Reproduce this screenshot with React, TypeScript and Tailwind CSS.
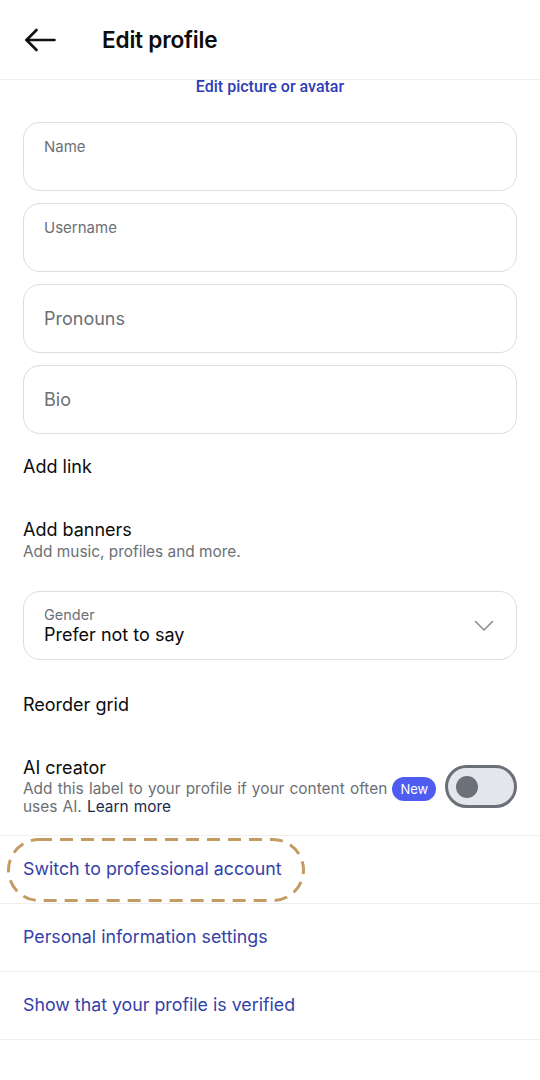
import React from "react";

const Field = ({ label, floating }: { label: string; floating?: boolean }) => (
  <div className="flex h-[69px] w-full flex-col rounded-[17px] border-[1.5px] border-[#dcdce2] px-[20px]">
    {floating ? (
      <span className="pt-[15px] text-[15px] leading-[18px] text-[#6b6f76]">{label}</span>
    ) : (
      <span className="my-auto text-[18px] leading-[22px] text-[#6b6f76]">{label}</span>
    )}
  </div>
);

const LinkRow = ({ children }: { children: React.ReactNode }) => (
  <div className="relative flex h-[68px] items-center border-b border-[#efefef] px-[23px] text-[17.8px] text-[#3441a8]">
    {children}
  </div>
);

export default function App() {
  return (
    <div className="min-h-screen w-full bg-white font-['Inter',sans-serif] text-[#0c0c0c]">
      {/* Header */}
      <div className="flex h-[80px] items-center border-b border-[#efefef] px-[24px]">
        <svg width="32" height="24" viewBox="0 0 32 24" fill="none" stroke="#111" strokeWidth="2.6" strokeLinecap="round" strokeLinejoin="round">
          <path d="M30.5 12H2.5" />
          <path d="M12.5 2L2.5 12l10 10" />
        </svg>
        <h1 className="ml-[46px] text-[22.6px] font-semibold tracking-[-0.2px]">Edit profile</h1>
      </div>

      <div className="text-center font-['Roboto',sans-serif] text-[16px] font-medium leading-[14px] text-[#2e3db5]">
        Edit picture or avatar
      </div>

      <div className="mt-[28px] flex flex-col gap-[12px] px-[23px]">
        <Field label="Name" floating />
        <Field label="Username" floating />
        <Field label="Pronouns" />
        <Field label="Bio" />
      </div>

      <div className="px-[23px]">
        <div className="mt-[21px] text-[18px] leading-[24px]">Add link</div>

        <div className="mt-[39px]">
          <div className="text-[18px] leading-[24px]">Add banners</div>
          <div className="text-[15.4px] leading-[20px] text-[#6b6f76]">Add music, profiles and more.</div>
        </div>

        <div className="mt-[29px] flex h-[69px] items-center rounded-[17px] border-[1.5px] border-[#dcdce2] pl-[20px] pr-[22px]">
          <div className="flex flex-1 flex-col">
            <span className="text-[14.5px] leading-[18px] text-[#6b6f76]">Gender</span>
            <span className="text-[18px] leading-[22px]">Prefer not to say</span>
          </div>
          <svg width="20" height="12" viewBox="0 0 20 12" fill="none" stroke="#8e8e93" strokeWidth="1.6" strokeLinecap="round" strokeLinejoin="round">
            <path d="M1.5 1.5L10 10l8.5-8.5" />
          </svg>
        </div>

        <div className="mt-[33px] text-[18px] leading-[24px]">Reorder grid</div>

        <div className="mt-[39px] flex items-start">
          <div className="w-[418px]">
            <div className="text-[18px] leading-[24px]">AI creator</div>
            <div className="text-[15.4px] leading-[18px] text-[#6b6f76] [word-spacing:0.9px]">
              Add this label to your profile if your content often{" "}
              <span className="rounded-full bg-[#4e5cf0] px-[8px] py-[4px] text-[13px] leading-[18px] text-white">
                New
              </span>{" "}
              uses AI. <span className="text-[#1b2a4e]">Learn more</span>
            </div>
          </div>
          <div className="ml-auto mt-[9px] flex h-[43px] w-[72px] items-center rounded-full border-[3px] border-[#6b6f78] bg-[#e4e6eb] pl-[8px]">
            <div className="h-[22px] w-[22px] rounded-full bg-[#6b7079]" />
          </div>
        </div>
      </div>

      <div className="mt-[19px] border-t border-[#efefef]">
        <LinkRow>
          Switch to professional account
          <svg className="pointer-events-none absolute left-[7px] top-[2px]" width="298" height="64" viewBox="0 0 298 64" fill="none">
            <rect x="1.5" y="1.5" width="295" height="61" rx="30.5" stroke="#c49c63" strokeWidth="3" strokeDasharray="13 8" />
          </svg>
        </LinkRow>
        <LinkRow>Personal information settings</LinkRow>
        <LinkRow>Show that your profile is verified</LinkRow>
      </div>
    </div>
  );
}
